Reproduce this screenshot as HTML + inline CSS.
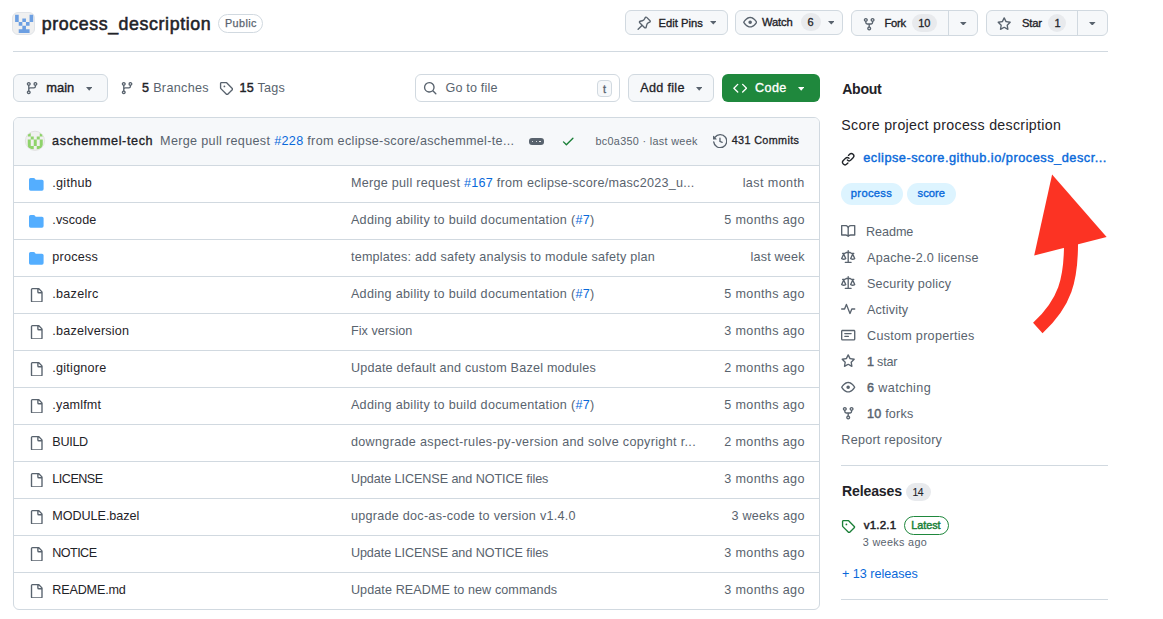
<!DOCTYPE html>
<html><head><meta charset="utf-8"><style>
html,body{margin:0;padding:0;width:1163px;height:619px;overflow:hidden;background:#fff;}
body{position:relative;font-family:"Liberation Sans", sans-serif;color:#1f2328;}
.t{position:absolute;white-space:nowrap;line-height:1;}
b{font-weight:700;}
.sb{-webkit-text-stroke:0.45px currentColor;}
</style></head><body>
<div style="position:absolute;left:12px;top:12px;width:23px;height:23px;box-sizing:border-box;background:#f0f0f0;border:1px solid #e1e4e8;border-radius:6px;"></div><svg style="position:absolute;left:0;top:0" width="40" height="40"><g fill="#6c9fe2"><path d="M15.10 14.85h3.62v3.62h-3.62zM29.58 14.85h3.62v3.62h-3.62zM15.10 18.47h3.62v3.62h-3.62zM22.34 18.47h3.62v3.62h-3.62zM29.58 18.47h3.62v3.62h-3.62zM18.72 22.09h3.62v3.62h-3.62zM25.96 22.09h3.62v3.62h-3.62zM22.34 25.71h3.62v3.62h-3.62zM18.72 29.33h3.62v3.62h-3.62zM22.34 29.33h3.62v3.62h-3.62zM25.96 29.33h3.62v3.62h-3.62z"/></g></svg><div id="t8b17212c1c" class="t" style="left:41.68px;top:16px;font-size:17.8px;letter-spacing:0.600px;-webkit-text-stroke:0.55px currentColor;">process_description</div><div style="position:absolute;left:218px;top:14px;width:45px;height:19px;box-sizing:border-box;border:1px solid #d1d9e0;border-radius:10px;"></div><div id="tdd5ad1b8c6" class="t" style="left:225.00px;top:18px;font-size:10.8px;color:#59636e;letter-spacing:0.396px;-webkit-text-stroke:0.25px currentColor;">Public</div><div style="position:absolute;left:625px;top:10px;width:102.5px;height:25px;box-sizing:border-box;background:#f6f8fa;border:1px solid #d1d9e0;border-radius:6px;"></div><svg style="position:absolute;left:636.80px;top:16.40px" width="14.4" height="14.4" viewBox="0 0 16 16"><path fill="#59636e" d="m11.294.984 3.722 3.722a1.75 1.75 0 0 1-.504 2.826l-1.327.613a3.089 3.089 0 0 0-1.707 2.084l-.584 2.454c-.317 1.332-1.972 1.8-2.94.832L5.75 11.311 1.78 15.28a.749.749 0 1 1-1.06-1.06l3.969-3.97-2.204-2.204c-.968-.968-.5-2.623.832-2.94l2.454-.584a3.08 3.08 0 0 0 2.084-1.707l.613-1.327a1.75 1.75 0 0 1 2.826-.504ZM6.283 9.723l2.732 2.731a.25.25 0 0 0 .42-.119l.584-2.454a4.586 4.586 0 0 1 2.537-3.098l1.328-.613a.25.25 0 0 0 .072-.404l-3.722-3.722a.25.25 0 0 0-.404.072l-.613 1.328a4.584 4.584 0 0 1-3.098 2.537l-2.454.584a.25.25 0 0 0-.119.42l2.731 2.732Z"/></svg><div id="tac3225b6e4" class="t" style="left:658.42px;top:18px;font-size:11.2px;letter-spacing:0.022px;-webkit-text-stroke:0.35px currentColor;">Edit Pins</div><svg style="position:absolute;left:709.70px;top:21.00px" width="6.6" height="3.6" viewBox="0 0 6.6 3.6"><path fill="#59636e" d="M0 0h6.6L3.3 3.6z"/></svg><div style="position:absolute;left:735px;top:10px;width:107.5px;height:25px;box-sizing:border-box;background:#f6f8fa;border:1px solid #d1d9e0;border-radius:6px;"></div><svg style="position:absolute;left:742.80px;top:14.80px" width="14.4" height="14.4" viewBox="0 0 16 16"><path fill="#59636e" d="M8 2c1.981 0 3.671.992 4.933 2.078 1.27 1.091 2.187 2.345 2.637 3.023a1.62 1.62 0 0 1 0 1.798c-.45.678-1.367 1.932-2.637 3.023C11.67 13.008 9.981 14 8 14c-1.981 0-3.671-.992-4.933-2.078C1.797 10.83.88 9.576.43 8.898a1.62 1.62 0 0 1 0-1.798c.45-.677 1.367-1.931 2.637-3.022C4.33 2.992 6.019 2 8 2ZM1.679 7.932a.12.12 0 0 0 0 .136c.411.622 1.241 1.75 2.366 2.717C5.176 11.758 6.527 12.5 8 12.5c1.473 0 2.825-.742 3.955-1.715 1.124-.967 1.954-2.096 2.366-2.717a.12.12 0 0 0 0-.136c-.412-.621-1.242-1.75-2.366-2.717C10.824 4.242 9.473 3.5 8 3.5c-1.473 0-2.825.742-3.955 1.715-1.124.967-1.954 2.096-2.366 2.717ZM8 10a2 2 0 1 1-.001-3.999A2 2 0 0 1 8 10Z"/></svg><div id="tc97a226b69" class="t" style="left:761.94px;top:17px;font-size:11.2px;letter-spacing:-0.135px;-webkit-text-stroke:0.35px currentColor;">Watch</div><div style="position:absolute;left:801px;top:13px;width:20px;height:18px;box-sizing:border-box;background:#e8eaed;border-radius:9px;"></div><div id="t34bc808f8b" class="t" style="left:807.54px;top:17px;font-size:11px;-webkit-text-stroke:0.3px currentColor;">6</div><svg style="position:absolute;left:827.70px;top:21.00px" width="6.6" height="3.6" viewBox="0 0 6.6 3.6"><path fill="#59636e" d="M0 0h6.6L3.3 3.6z"/></svg><div style="position:absolute;left:851px;top:10px;width:126.5px;height:26px;box-sizing:border-box;background:#f6f8fa;border:1px solid #d1d9e0;border-radius:6px;"></div><div style="position:absolute;left:948px;top:10px;width:1px;height:26px;box-sizing:border-box;background:#d1d9e0;"></div><svg style="position:absolute;left:862.30px;top:16.50px" width="14.4" height="14.4" viewBox="0 0 16 16"><path fill="#59636e" d="M5 5.372v.878c0 .414.336.75.75.75h4.5a.75.75 0 0 0 .75-.75v-.878a2.25 2.25 0 1 1 1.5 0v.878a2.25 2.25 0 0 1-2.25 2.25h-1.5v2.128a2.251 2.251 0 1 1-1.5 0V8.5h-1.5A2.25 2.25 0 0 1 3.5 6.250v-.878a2.25 2.25 0 1 1 1.5 0ZM5 3.25a.75.75 0 1 0-1.5 0 .75.75 0 0 0 1.5 0Zm6.75.75a.75.75 0 1 0 0-1.5.75.75 0 0 0 0 1.5Zm-3 8.75a.75.75 0 1 0-1.5 0 .75.75 0 0 0 1.5 0Z"/></svg><div id="te26f756ed9" class="t" style="left:884.50px;top:18px;font-size:11.2px;letter-spacing:-0.300px;-webkit-text-stroke:0.35px currentColor;">Fork</div><div style="position:absolute;left:912px;top:14px;width:25px;height:18px;box-sizing:border-box;background:#e8eaed;border-radius:9px;"></div><div id="t4f3d571c36" class="t" style="left:918.26px;top:18px;font-size:11px;letter-spacing:-0.180px;-webkit-text-stroke:0.3px currentColor;">10</div><svg style="position:absolute;left:960.20px;top:21.50px" width="6.6" height="3.6" viewBox="0 0 6.6 3.6"><path fill="#59636e" d="M0 0h6.6L3.3 3.6z"/></svg><div style="position:absolute;left:986px;top:10px;width:121.5px;height:26px;box-sizing:border-box;background:#f6f8fa;border:1px solid #d1d9e0;border-radius:6px;"></div><div style="position:absolute;left:1077px;top:10px;width:1px;height:26px;box-sizing:border-box;background:#d1d9e0;"></div><svg style="position:absolute;left:996.80px;top:17.00px" width="14.4" height="14.4" viewBox="0 0 16 16"><path fill="#59636e" d="M8 .25a.75.75 0 0 1 .673.418l1.882 3.815 4.21.612a.75.75 0 0 1 .416 1.279l-3.046 2.97.719 4.192a.751.751 0 0 1-1.088.791L8 12.347l-3.766 1.98a.75.75 0 0 1-1.088-.79l.72-4.194L.818 6.374a.75.75 0 0 1 .416-1.28l4.210-.611L7.327.668A.75.75 0 0 1 8 .25Zm0 2.445L6.615 5.5a.75.75 0 0 1-.564.41l-3.097.45 2.24 2.184a.75.75 0 0 1 .216.664l-.528 3.084 2.769-1.456a.75.75 0 0 1 .698 0l2.770 1.456-.53-3.084a.75.75 0 0 1 .216-.664l2.24-2.183-3.096-.45a.75.75 0 0 1-.564-.41L8 2.694Z"/></svg><div id="t8c9d972296" class="t" style="left:1022.00px;top:18px;font-size:11.2px;letter-spacing:-0.180px;-webkit-text-stroke:0.35px currentColor;">Star</div><div style="position:absolute;left:1048px;top:14px;width:18px;height:18px;box-sizing:border-box;background:#e8eaed;border-radius:9px;"></div><div id="t7c7e71d39a" class="t" style="left:1054.40px;top:18px;font-size:11px;-webkit-text-stroke:0.3px currentColor;">1</div><svg style="position:absolute;left:1089.00px;top:21.50px" width="6.6" height="3.6" viewBox="0 0 6.6 3.6"><path fill="#59636e" d="M0 0h6.6L3.3 3.6z"/></svg><div style="position:absolute;left:13px;top:51px;width:1095px;height:1px;box-sizing:border-box;background:#d1d9e0;"></div><div style="position:absolute;left:13px;top:74px;width:95px;height:28px;box-sizing:border-box;background:#f6f8fa;border:1px solid #d1d9e0;border-radius:6px;"></div><svg style="position:absolute;left:25.10px;top:81.30px" width="14.2" height="14.2" viewBox="0 0 16 16"><path fill="#59636e" d="M9.5 3.25a2.25 2.25 0 1 1 3 2.122V6A2.5 2.5 0 0 1 10 8.5H6a1 1 0 0 0-1 1v1.128a2.251 2.251 0 1 1-1.5 0V5.372a2.25 2.25 0 1 1 1.5 0v1.836A2.493 2.493 0 0 1 6 7h4a1 1 0 0 0 1-1v-.628A2.25 2.25 0 0 1 9.5 3.25Zm-6 0a.75.75 0 1 0 1.5 0 .75.75 0 0 0-1.5 0Zm8.25-.75a.75.75 0 1 0 0 1.5.75.75 0 0 0 0-1.5ZM4.250 12a.75.75 0 1 0 0 1.5.75.75 0 0 0 0-1.5Z"/></svg><div id="t1631a690d2" class="t" style="left:46.26px;top:82px;font-size:12.9px;letter-spacing:-0.000px;-webkit-text-stroke:0.4px currentColor;">main</div><svg style="position:absolute;left:86.00px;top:87.00px" width="6.4" height="3.8" viewBox="0 0 6.4 3.8"><path fill="#59636e" d="M0 0h6.4L3.2 3.8z"/></svg><svg style="position:absolute;left:120.20px;top:81.30px" width="14.2" height="14.2" viewBox="0 0 16 16"><path fill="#59636e" d="M9.5 3.25a2.25 2.25 0 1 1 3 2.122V6A2.5 2.5 0 0 1 10 8.5H6a1 1 0 0 0-1 1v1.128a2.251 2.251 0 1 1-1.5 0V5.372a2.25 2.25 0 1 1 1.5 0v1.836A2.493 2.493 0 0 1 6 7h4a1 1 0 0 0 1-1v-.628A2.25 2.25 0 0 1 9.5 3.25Zm-6 0a.75.75 0 1 0 1.5 0 .75.75 0 0 0-1.5 0Zm8.25-.75a.75.75 0 1 0 0 1.5.75.75 0 0 0 0-1.5ZM4.250 12a.75.75 0 1 0 0 1.5.75.75 0 0 0 0-1.5Z"/></svg><div id="t683ed94d93" class="t" style="left:142.00px;top:82px;font-size:12.6px;color:#59636e;letter-spacing:0.320px;"><span style="color:#1f2328;-webkit-text-stroke:0.45px #1f2328">5</span> Branches</div><svg style="position:absolute;left:218.60px;top:80.80px" width="14.4" height="14.4" viewBox="0 0 16 16"><path fill="#59636e" d="M1 7.775V2.75C1 1.784 1.784 1 2.75 1h5.025c.464 0 .91.184 1.238.513l6.25 6.25a1.75 1.75 0 0 1 0 2.474l-5.026 5.026a1.75 1.75 0 0 1-2.474 0l-6.25-6.25A1.752 1.752 0 0 1 1 7.775Zm1.5 0c0 .066.026.13.073.177l6.25 6.25a.25.25 0 0 0 .354 0l5.025-5.025a.25.25 0 0 0 0-.354l-6.25-6.25a.25.25 0 0 0-.177-.073H2.75a.25.25 0 0 0-.25.25ZM6 5a1 1 0 1 1 0 2 1 1 0 0 1 0-2Z"/></svg><div id="t6537c4cc53" class="t" style="left:239.42px;top:82px;font-size:12.6px;color:#59636e;letter-spacing:0.240px;"><span style="color:#1f2328;-webkit-text-stroke:0.45px #1f2328">15</span> Tags</div><div style="position:absolute;left:415px;top:74px;width:205px;height:28px;box-sizing:border-box;background:#fff;border:1px solid #d1d9e0;border-radius:6px;"></div><svg style="position:absolute;left:422.80px;top:80.80px" width="14.4" height="14.4" viewBox="0 0 16 16"><path fill="#59636e" d="M10.68 11.74a6 6 0 0 1-7.922-8.982 6 6 0 0 1 8.982 7.922l3.04 3.04a.749.749 0 0 1-.326 1.275.749.749 0 0 1-.734-.215ZM11.5 7a4.499 4.499 0 1 0-8.997 0A4.499 4.499 0 0 0 11.5 7Z"/></svg><div id="ta41661dc48" class="t" style="left:445.58px;top:82px;font-size:12.6px;color:#59636e;letter-spacing:0.160px;">Go to file</div><div style="position:absolute;left:597px;top:80px;width:15px;height:17px;box-sizing:border-box;border:1px solid #d1d9e0;border-radius:4px;background:#f6f8fa;"></div><div id="t28959b50f7" class="t" style="left:603.00px;top:84px;font-size:11px;color:#59636e;-webkit-text-stroke:0.3px currentColor;font-family:"Liberation Mono",monospace;">t</div><div style="position:absolute;left:628px;top:74px;width:86px;height:28px;box-sizing:border-box;background:#f6f8fa;border:1px solid #d1d9e0;border-radius:6px;"></div><div id="t6fa10919dd" class="t" style="left:640.24px;top:82px;font-size:12.6px;letter-spacing:0.309px;-webkit-text-stroke:0.3px currentColor;">Add file</div><svg style="position:absolute;left:695.80px;top:87.00px" width="6.4" height="3.8" viewBox="0 0 6.4 3.8"><path fill="#59636e" d="M0 0h6.4L3.2 3.8z"/></svg><div style="position:absolute;left:722px;top:74px;width:98px;height:28px;box-sizing:border-box;background:#1f883d;border-radius:6px;"></div><svg style="position:absolute;left:732.50px;top:80.80px" width="14.4" height="14.4" viewBox="0 0 16 16"><path fill="#ffffff" d="m11.28 3.22 4.25 4.25a.75.75 0 0 1 0 1.06l-4.25 4.25a.749.749 0 0 1-1.275-.326.749.749 0 0 1 .215-.734L13.94 8l-3.72-3.72a.749.749 0 0 1 .326-1.275.749.749 0 0 1 .734.215Zm-6.56 0a.751.751 0 0 1 1.042.018.751.751 0 0 1 .018 1.042L2.06 8l3.72 3.72a.749.749 0 0 1-.326 1.275.749.749 0 0 1-.734-.215L.47 8.53a.75.75 0 0 1 0-1.060Z"/></svg><div id="tdfc1d32175" class="t" style="left:755.08px;top:82px;font-size:12.6px;color:#ffffff;letter-spacing:0.360px;-webkit-text-stroke:0.35px currentColor;">Code</div><svg style="position:absolute;left:797.80px;top:87.00px" width="6.4" height="3.8" viewBox="0 0 6.4 3.8"><path fill="#ffffff" d="M0 0h6.4L3.2 3.8z"/></svg><div style="position:absolute;left:13px;top:117px;width:807px;height:493px;box-sizing:border-box;border:1px solid #d1d9e0;border-radius:6px;"></div><div style="position:absolute;left:14px;top:118px;width:805px;height:47px;box-sizing:border-box;background:#f6f8fa;border-radius:5px 5px 0 0;"></div><div style="position:absolute;left:14px;top:165px;width:805px;height:1px;box-sizing:border-box;background:#d1d9e0;"></div><svg style="position:absolute;left:0;top:0" width="60" height="160"><defs><clipPath id="av"><circle cx="35" cy="140.8" r="9.2"/></clipPath></defs><circle cx="35" cy="140.8" r="9.6" fill="#f0f0f0" stroke="#dcdcdc" stroke-width="0.8"/><g clip-path="url(#av)" fill="#8fd36b"><path d="M27.76 133.20h3v3.2h-3zM39.76 133.20h3v3.2h-3zM30.76 136.40h3v3.2h-3zM36.76 136.40h3v3.2h-3zM27.76 139.60h3v3.2h-3zM33.76 139.60h3v3.2h-3zM39.76 139.60h3v3.2h-3zM27.76 142.80h3v3.2h-3zM33.76 142.80h3v3.2h-3zM39.76 142.80h3v3.2h-3zM27.76 146.00h3v3.2h-3zM30.76 146.00h3v3.2h-3zM36.76 146.00h3v3.2h-3zM39.76 146.00h3v3.2h-3z"/></g></svg><div id="t34e2957233" class="t" style="left:52.08px;top:135px;font-size:12.6px;letter-spacing:0.623px;-webkit-text-stroke:0.35px currentColor;">aschemmel-tech</div><div id="tb437428aec" class="t" style="left:160.10px;top:135px;font-size:12.6px;color:#59636e;letter-spacing:0.328px;">Merge pull request <span style="color:#0969da">#228</span> from eclipse-score/aschemmel-te...</div><div style="position:absolute;left:528.5px;top:138.3px;width:15.5px;height:6.6px;box-sizing:border-box;background:#59636e;border-radius:3px;"></div><div style="position:absolute;left:531.6px;top:140.8px;width:1.6px;height:1.6px;background:#fff;border-radius:1px"></div><div style="position:absolute;left:535.5px;top:140.8px;width:1.6px;height:1.6px;background:#fff;border-radius:1px"></div><div style="position:absolute;left:539.4px;top:140.8px;width:1.6px;height:1.6px;background:#fff;border-radius:1px"></div><svg style="position:absolute;left:561.20px;top:134.30px" width="14.4" height="14.4" viewBox="0 0 16 16"><path fill="#1a7f37" d="M13.78 4.22a.75.75 0 0 1 0 1.06l-7.25 7.25a.75.75 0 0 1-1.06 0L2.22 9.28a.751.751 0 0 1 .018-1.042.751.751 0 0 1 1.042-.018L6 10.94l6.72-6.72a.75.75 0 0 1 1.06 0Z"/></svg><div id="t84d6ec03fd" class="t" style="left:595.42px;top:136px;font-size:10.8px;color:#59636e;letter-spacing:0.330px;">bc0a350 · last week</div><svg style="position:absolute;left:712.80px;top:133.80px" width="14.4" height="14.4" viewBox="0 0 16 16"><path fill="#59636e" d="m.427 1.927 1.215 1.215a8.002 8.002 0 1 1-1.6 5.685.75.75 0 1 1 1.493-.154 6.5 6.5 0 1 0 1.18-4.458l1.358 1.358A.25.25 0 0 1 3.896 6H.25A.25.25 0 0 1 0 5.75V2.104a.25.25 0 0 1 .427-.177ZM7.75 4a.75.75 0 0 1 .75.75v2.992l2.028.812a.75.75 0 0 1-.557 1.392l-2.5-1A.751.751 0 0 1 7 8.25v-3.5A.75.75 0 0 1 7.750 4Z"/></svg><div id="t3a98413a29" class="t" style="left:731.75px;top:135px;font-size:10.8px;letter-spacing:0.360px;-webkit-text-stroke:0.3px currentColor;">431 Commits</div><svg style="position:absolute;left:29.00px;top:177.20px" width="14.6" height="14.6" viewBox="0 0 16 16"><path fill="#54aeff" d="M1.75 1A1.75 1.75 0 0 0 0 2.75v10.5C0 14.216.784 15 1.75 15h12.5A1.75 1.75 0 0 0 16 13.25v-8.5A1.75 1.75 0 0 0 14.25 3H7.5a.25.25 0 0 1-.2-.1l-.9-1.2C6.07 1.26 5.55 1 5 1H1.75Z"/></svg><div id="t693cb65e8e" class="t" style="left:52.34px;top:177px;font-size:12.6px;letter-spacing:0.270px;">.github</div><div id="t757d5afaf3" class="t" style="left:350.92px;top:177px;font-size:12.6px;color:#59636e;letter-spacing:0.275px;">Merge pull request <span style="color:#0969da">#167</span> from eclipse-score/masc2023_u...</div><div id="tedafb58f2a" class="t" style="right:358.26px;top:177px;font-size:12.6px;color:#59636e;letter-spacing:0.400px;">last month</div><div style="position:absolute;left:14px;top:202px;width:805px;height:1px;box-sizing:border-box;background:#d1d9e0;"></div><svg style="position:absolute;left:29.00px;top:214.20px" width="14.6" height="14.6" viewBox="0 0 16 16"><path fill="#54aeff" d="M1.75 1A1.75 1.75 0 0 0 0 2.75v10.5C0 14.216.784 15 1.75 15h12.5A1.75 1.75 0 0 0 16 13.25v-8.5A1.75 1.75 0 0 0 14.25 3H7.5a.25.25 0 0 1-.2-.1l-.9-1.2C6.07 1.26 5.55 1 5 1H1.75Z"/></svg><div id="tb964a43cd2" class="t" style="left:52.34px;top:214px;font-size:12.6px;letter-spacing:0.090px;">.vscode</div><div id="t1fcf0367ab" class="t" style="left:350.92px;top:214px;font-size:12.6px;color:#59636e;letter-spacing:0.299px;">Adding ability to build documentation (<span style="color:#0969da">#7</span>)</div><div id="t63a347cd2c" class="t" style="right:358.26px;top:214px;font-size:12.6px;color:#59636e;letter-spacing:0.344px;">5 months ago</div><div style="position:absolute;left:14px;top:239px;width:805px;height:1px;box-sizing:border-box;background:#d1d9e0;"></div><svg style="position:absolute;left:29.00px;top:251.20px" width="14.6" height="14.6" viewBox="0 0 16 16"><path fill="#54aeff" d="M1.75 1A1.75 1.75 0 0 0 0 2.75v10.5C0 14.216.784 15 1.75 15h12.5A1.75 1.75 0 0 0 16 13.25v-8.5A1.75 1.75 0 0 0 14.25 3H7.5a.25.25 0 0 1-.2-.1l-.9-1.2C6.07 1.26 5.55 1 5 1H1.75Z"/></svg><div id="t13e4412f89" class="t" style="left:52.34px;top:251px;font-size:12.6px;letter-spacing:0.240px;">process</div><div id="t881ccb6239" class="t" style="left:350.92px;top:251px;font-size:12.6px;color:#59636e;letter-spacing:0.233px;">templates: add safety analysis to module safety plan</div><div id="tad0153e79e" class="t" style="right:358.26px;top:251px;font-size:12.6px;color:#59636e;letter-spacing:0.203px;">last week</div><div style="position:absolute;left:14px;top:276px;width:805px;height:1px;box-sizing:border-box;background:#d1d9e0;"></div><svg style="position:absolute;left:29.00px;top:287.60px" width="14.6" height="14.6" viewBox="0 0 16 16"><path fill="#59636e" d="M2 1.75C2 .784 2.784 0 3.75 0h6.586c.464 0 .909.184 1.237.513l2.914 2.914c.329.328.513.773.513 1.237v9.586A1.75 1.75 0 0 1 13.25 16h-9.5A1.75 1.75 0 0 1 2 14.25Zm1.75-.25a.25.25 0 0 0-.25.25v12.5c0 .138.112.25.25.25h9.5a.25.25 0 0 0 .25-.25V6h-2.75A1.75 1.75 0 0 1 9 4.25V1.5Zm6.75.062V4.25c0 .138.112.25.25.25h2.688l-.011-.013-2.914-2.914-.013-.011Z"/></svg><div id="tc4758a8e51" class="t" style="left:52.34px;top:288px;font-size:12.6px;letter-spacing:0.257px;">.bazelrc</div><div id="t80e3af01cb" class="t" style="left:350.92px;top:288px;font-size:12.6px;color:#59636e;letter-spacing:0.299px;">Adding ability to build documentation (<span style="color:#0969da">#7</span>)</div><div id="ta78df9fcaa" class="t" style="right:358.26px;top:288px;font-size:12.6px;color:#59636e;letter-spacing:0.344px;">5 months ago</div><div style="position:absolute;left:14px;top:313px;width:805px;height:1px;box-sizing:border-box;background:#d1d9e0;"></div><svg style="position:absolute;left:29.00px;top:324.60px" width="14.6" height="14.6" viewBox="0 0 16 16"><path fill="#59636e" d="M2 1.75C2 .784 2.784 0 3.75 0h6.586c.464 0 .909.184 1.237.513l2.914 2.914c.329.328.513.773.513 1.237v9.586A1.75 1.75 0 0 1 13.25 16h-9.5A1.75 1.75 0 0 1 2 14.25Zm1.75-.25a.25.25 0 0 0-.25.25v12.5c0 .138.112.25.25.25h9.5a.25.25 0 0 0 .25-.25V6h-2.75A1.75 1.75 0 0 1 9 4.25V1.5Zm6.75.062V4.25c0 .138.112.25.25.25h2.688l-.011-.013-2.914-2.914-.013-.011Z"/></svg><div id="t6b29b31ef8" class="t" style="left:52.34px;top:325px;font-size:12.6px;letter-spacing:0.210px;">.bazelversion</div><div id="tfd774a989e" class="t" style="left:350.92px;top:325px;font-size:12.6px;color:#59636e;letter-spacing:0.054px;">Fix version</div><div id="tcd8273200e" class="t" style="right:358.26px;top:325px;font-size:12.6px;color:#59636e;letter-spacing:0.344px;">3 months ago</div><div style="position:absolute;left:14px;top:350px;width:805px;height:1px;box-sizing:border-box;background:#d1d9e0;"></div><svg style="position:absolute;left:29.00px;top:361.60px" width="14.6" height="14.6" viewBox="0 0 16 16"><path fill="#59636e" d="M2 1.75C2 .784 2.784 0 3.75 0h6.586c.464 0 .909.184 1.237.513l2.914 2.914c.329.328.513.773.513 1.237v9.586A1.75 1.75 0 0 1 13.25 16h-9.5A1.75 1.75 0 0 1 2 14.25Zm1.75-.25a.25.25 0 0 0-.25.25v12.5c0 .138.112.25.25.25h9.5a.25.25 0 0 0 .25-.25V6h-2.75A1.75 1.75 0 0 1 9 4.25V1.5Zm6.75.062V4.25c0 .138.112.25.25.25h2.688l-.011-.013-2.914-2.914-.013-.011Z"/></svg><div id="t6efb4a5c7c" class="t" style="left:52.34px;top:362px;font-size:12.6px;letter-spacing:0.240px;">.gitignore</div><div id="te20e4e4079" class="t" style="left:350.92px;top:362px;font-size:12.6px;color:#59636e;letter-spacing:0.218px;">Update default and custom Bazel modules</div><div id="tb817984655" class="t" style="right:358.26px;top:362px;font-size:12.6px;color:#59636e;letter-spacing:0.344px;">2 months ago</div><div style="position:absolute;left:14px;top:387px;width:805px;height:1px;box-sizing:border-box;background:#d1d9e0;"></div><svg style="position:absolute;left:29.00px;top:398.60px" width="14.6" height="14.6" viewBox="0 0 16 16"><path fill="#59636e" d="M2 1.75C2 .784 2.784 0 3.75 0h6.586c.464 0 .909.184 1.237.513l2.914 2.914c.329.328.513.773.513 1.237v9.586A1.75 1.75 0 0 1 13.25 16h-9.5A1.75 1.75 0 0 1 2 14.25Zm1.75-.25a.25.25 0 0 0-.25.25v12.5c0 .138.112.25.25.25h9.5a.25.25 0 0 0 .25-.25V6h-2.75A1.75 1.75 0 0 1 9 4.25V1.5Zm6.75.062V4.25c0 .138.112.25.25.25h2.688l-.011-.013-2.914-2.914-.013-.011Z"/></svg><div id="t2ddbf4104c" class="t" style="left:52.34px;top:399px;font-size:12.6px;letter-spacing:0.154px;">.yamlfmt</div><div id="td0062f35b5" class="t" style="left:350.92px;top:399px;font-size:12.6px;color:#59636e;letter-spacing:0.299px;">Adding ability to build documentation (<span style="color:#0969da">#7</span>)</div><div id="t9f760e296a" class="t" style="right:358.26px;top:399px;font-size:12.6px;color:#59636e;letter-spacing:0.344px;">5 months ago</div><div style="position:absolute;left:14px;top:424px;width:805px;height:1px;box-sizing:border-box;background:#d1d9e0;"></div><svg style="position:absolute;left:29.00px;top:435.60px" width="14.6" height="14.6" viewBox="0 0 16 16"><path fill="#59636e" d="M2 1.75C2 .784 2.784 0 3.75 0h6.586c.464 0 .909.184 1.237.513l2.914 2.914c.329.328.513.773.513 1.237v9.586A1.75 1.75 0 0 1 13.25 16h-9.5A1.75 1.75 0 0 1 2 14.25Zm1.75-.25a.25.25 0 0 0-.25.25v12.5c0 .138.112.25.25.25h9.5a.25.25 0 0 0 .25-.25V6h-2.75A1.75 1.75 0 0 1 9 4.25V1.5Zm6.75.062V4.25c0 .138.112.25.25.25h2.688l-.011-.013-2.914-2.914-.013-.011Z"/></svg><div id="t78476db322" class="t" style="left:52.34px;top:436px;font-size:12.6px;letter-spacing:-0.315px;">BUILD</div><div id="tc9a3def5b4" class="t" style="left:350.92px;top:436px;font-size:12.6px;color:#59636e;letter-spacing:0.325px;">downgrade aspect-rules-py-version and solve copyright r...</div><div id="tdfd9374d6f" class="t" style="right:358.26px;top:436px;font-size:12.6px;color:#59636e;letter-spacing:0.344px;">2 months ago</div><div style="position:absolute;left:14px;top:461px;width:805px;height:1px;box-sizing:border-box;background:#d1d9e0;"></div><svg style="position:absolute;left:29.00px;top:472.60px" width="14.6" height="14.6" viewBox="0 0 16 16"><path fill="#59636e" d="M2 1.75C2 .784 2.784 0 3.75 0h6.586c.464 0 .909.184 1.237.513l2.914 2.914c.329.328.513.773.513 1.237v9.586A1.75 1.75 0 0 1 13.25 16h-9.5A1.75 1.75 0 0 1 2 14.25Zm1.75-.25a.25.25 0 0 0-.25.25v12.5c0 .138.112.25.25.25h9.5a.25.25 0 0 0 .25-.25V6h-2.75A1.75 1.75 0 0 1 9 4.25V1.5Zm6.75.062V4.25c0 .138.112.25.25.25h2.688l-.011-.013-2.914-2.914-.013-.011Z"/></svg><div id="t772ee7caaa" class="t" style="left:52.34px;top:473px;font-size:12.6px;letter-spacing:-0.510px;">LICENSE</div><div id="t1b834441aa" class="t" style="left:350.92px;top:473px;font-size:12.6px;color:#59636e;letter-spacing:-0.066px;">Update LICENSE and NOTICE files</div><div id="tb383c43e73" class="t" style="right:358.26px;top:473px;font-size:12.6px;color:#59636e;letter-spacing:0.344px;">3 months ago</div><div style="position:absolute;left:14px;top:498px;width:805px;height:1px;box-sizing:border-box;background:#d1d9e0;"></div><svg style="position:absolute;left:29.00px;top:509.60px" width="14.6" height="14.6" viewBox="0 0 16 16"><path fill="#59636e" d="M2 1.75C2 .784 2.784 0 3.75 0h6.586c.464 0 .909.184 1.237.513l2.914 2.914c.329.328.513.773.513 1.237v9.586A1.75 1.75 0 0 1 13.25 16h-9.5A1.75 1.75 0 0 1 2 14.25Zm1.75-.25a.25.25 0 0 0-.25.25v12.5c0 .138.112.25.25.25h9.5a.25.25 0 0 0 .25-.25V6h-2.75A1.75 1.75 0 0 1 9 4.25V1.5Zm6.75.062V4.25c0 .138.112.25.25.25h2.688l-.011-.013-2.914-2.914-.013-.011Z"/></svg><div id="td0441876fb" class="t" style="left:52.34px;top:510px;font-size:12.6px;letter-spacing:-0.049px;">MODULE.bazel</div><div id="t4c3808f57f" class="t" style="left:350.92px;top:510px;font-size:12.6px;color:#59636e;letter-spacing:0.270px;">upgrade doc-as-code to version v1.4.0</div><div id="t8b27b85cb4" class="t" style="right:358.26px;top:510px;font-size:12.6px;color:#59636e;letter-spacing:0.234px;">3 weeks ago</div><div style="position:absolute;left:14px;top:535px;width:805px;height:1px;box-sizing:border-box;background:#d1d9e0;"></div><svg style="position:absolute;left:29.00px;top:546.60px" width="14.6" height="14.6" viewBox="0 0 16 16"><path fill="#59636e" d="M2 1.75C2 .784 2.784 0 3.75 0h6.586c.464 0 .909.184 1.237.513l2.914 2.914c.329.328.513.773.513 1.237v9.586A1.75 1.75 0 0 1 13.25 16h-9.5A1.75 1.75 0 0 1 2 14.25Zm1.75-.25a.25.25 0 0 0-.25.25v12.5c0 .138.112.25.25.25h9.5a.25.25 0 0 0 .25-.25V6h-2.75A1.75 1.75 0 0 1 9 4.25V1.5Zm6.75.062V4.25c0 .138.112.25.25.25h2.688l-.011-.013-2.914-2.914-.013-.011Z"/></svg><div id="t14eef5b31e" class="t" style="left:52.34px;top:547px;font-size:12.6px;letter-spacing:-0.576px;">NOTICE</div><div id="td86ba00a0a" class="t" style="left:350.92px;top:547px;font-size:12.6px;color:#59636e;letter-spacing:-0.066px;">Update LICENSE and NOTICE files</div><div id="tbae80f5edf" class="t" style="right:358.26px;top:547px;font-size:12.6px;color:#59636e;letter-spacing:0.344px;">3 months ago</div><div style="position:absolute;left:14px;top:572px;width:805px;height:1px;box-sizing:border-box;background:#d1d9e0;"></div><svg style="position:absolute;left:29.00px;top:583.60px" width="14.6" height="14.6" viewBox="0 0 16 16"><path fill="#59636e" d="M2 1.75C2 .784 2.784 0 3.75 0h6.586c.464 0 .909.184 1.237.513l2.914 2.914c.329.328.513.773.513 1.237v9.586A1.75 1.75 0 0 1 13.25 16h-9.5A1.75 1.75 0 0 1 2 14.25Zm1.75-.25a.25.25 0 0 0-.25.25v12.5c0 .138.112.25.25.25h9.5a.25.25 0 0 0 .25-.25V6h-2.75A1.75 1.75 0 0 1 9 4.25V1.5Zm6.75.062V4.25c0 .138.112.25.25.25h2.688l-.011-.013-2.914-2.914-.013-.011Z"/></svg><div id="t74edcec3f6" class="t" style="left:52.34px;top:584px;font-size:12.6px;letter-spacing:-0.180px;">README.md</div><div id="tb11e4d496f" class="t" style="left:350.92px;top:584px;font-size:12.6px;color:#59636e;letter-spacing:0.090px;">Update README to new commands</div><div id="ta1531fbd84" class="t" style="right:358.26px;top:584px;font-size:12.6px;color:#59636e;letter-spacing:0.344px;">3 months ago</div><div id="t269ccccff1" class="t" style="left:842.24px;top:82px;font-size:14.1px;font-weight:700;letter-spacing:-0.315px;">About</div><div id="t250615a776" class="t" style="left:841.34px;top:118px;font-size:14.2px;letter-spacing:0.304px;">Score project process description</div><svg style="position:absolute;left:841.30px;top:151.80px" width="14.4" height="14.4" viewBox="0 0 16 16"><path fill="#1f2328" d="m7.775 3.275 1.25-1.25a3.5 3.5 0 1 1 4.95 4.95l-2.5 2.5a3.5 3.5 0 0 1-4.95 0 .751.751 0 0 1 .018-1.042.751.751 0 0 1 1.042-.018 1.998 1.998 0 0 0 2.83 0l2.5-2.5a2.002 2.002 0 0 0-2.83-2.83l-1.25 1.25a.751.751 0 0 1-1.042-.018.751.751 0 0 1-.018-1.042Zm-4.69 9.64a1.998 1.998 0 0 0 2.83 0l1.25-1.25a.751.751 0 0 1 1.042.018.751.751 0 0 1 .018 1.042l-1.25 1.25a3.5 3.5 0 1 1-4.95-4.95l2.5-2.5a3.5 3.5 0 0 1 4.95 0 .751.751 0 0 1-.018 1.042.751.751 0 0 1-1.042.018 1.998 1.998 0 0 0-2.83 0l-2.5 2.5a1.998 1.998 0 0 0 0 2.830Z"/></svg><div id="tdb09357d8a" class="t" style="left:863.22px;top:152px;font-size:12.8px;color:#0969da;letter-spacing:0.489px;-webkit-text-stroke:0.4px currentColor;">eclipse-score.github.io/process_descr...</div><div style="position:absolute;left:841px;top:183px;width:62px;height:22px;box-sizing:border-box;background:#ddf4ff;border-radius:11px;"></div><div id="t450db30186" class="t" style="left:850.86px;top:188px;font-size:11.2px;color:#0969da;letter-spacing:0.285px;-webkit-text-stroke:0.35px currentColor;">process</div><div style="position:absolute;left:906.5px;top:183px;width:49.5px;height:22px;box-sizing:border-box;background:#ddf4ff;border-radius:11px;"></div><div id="t36bfde3de8" class="t" style="left:917.57px;top:188px;font-size:11.2px;color:#0969da;-webkit-text-stroke:0.35px currentColor;">score</div><svg style="position:absolute;left:841.20px;top:224.20px" width="14.4" height="14.4" viewBox="0 0 16 16"><path fill="#59636e" d="M0 1.75A.75.75 0 0 1 .75 1h4.253c1.227 0 2.317.59 3 1.501A3.743 3.743 0 0 1 11.006 1h4.245a.75.75 0 0 1 .75.75v10.5a.75.75 0 0 1-.75.75h-4.507a2.25 2.25 0 0 0-1.591.659l-.622.621a.75.75 0 0 1-1.060 0l-.622-.621A2.25 2.25 0 0 0 5.258 13H.75a.75.75 0 0 1-.75-.75Zm7.251 10.324.004-5.073-.002-2.253A2.25 2.25 0 0 0 5.003 2.5H1.5v9h3.757a3.75 3.75 0 0 1 1.994.574ZM8.755 4.75l-.004 7.322a3.752 3.752 0 0 1 1.992-.572H14.5v-9h-3.495a2.25 2.25 0 0 0-2.250 2.25Z"/></svg><div id="te7648f6b4c" class="t" style="left:866.10px;top:226px;font-size:12.6px;color:#59636e;letter-spacing:-0.072px;">Readme</div><svg style="position:absolute;left:841.20px;top:250.20px" width="14.4" height="14.4" viewBox="0 0 16 16"><path fill="#59636e" d="M8.75.75V2h.985c.304 0 .603.08.867.231l1.29.736c.038.022.08.033.124.033h2.234a.75.75 0 0 1 0 1.5h-.427l2.111 4.692a.75.75 0 0 1-.154.838l-.53-.53.529.531-.001.002-.002.002-.006.006-.006.005-.01.01-.045.04c-.21.176-.441.327-.686.45C14.556 10.78 13.88 11 13 11a4.498 4.498 0 0 1-2.023-.454 3.544 3.544 0 0 1-.686-.45l-.045-.04-.016-.015-.006-.006-.004-.004v-.001a.75.75 0 0 1-.154-.838L12.178 4.5h-.162c-.305 0-.604-.079-.868-.231l-1.29-.736a.245.245 0 0 0-.124-.033H8.75V13h2.5a.75.75 0 0 1 0 1.5h-6.5a.75.75 0 0 1 0-1.5h2.5V3.5h-.984a.245.245 0 0 0-.124.033l-1.289.737c-.265.15-.564.23-.869.23h-.162l2.112 4.692a.75.75 0 0 1-.154.838l-.53-.53.529.531-.001.002-.002.002-.006.006-.016.015-.045.04c-.21.176-.441.327-.686.45C4.556 10.78 3.88 11 3 11a4.498 4.498 0 0 1-2.023-.454 3.544 3.544 0 0 1-.686-.45l-.045-.04-.016-.015-.006-.006-.004-.004v-.001a.75.75 0 0 1-.154-.838L2.178 4.5H1.75a.75.75 0 0 1 0-1.5h2.234a.249.249 0 0 0 .125-.033l1.288-.737c.265-.15.564-.23.869-.23h.984V.75a.75.75 0 0 1 1.5 0Zm2.945 8.477c.285.135.718.273 1.305.273s1.02-.138 1.305-.273L13 6.327Zm-10 0c.285.135.718.273 1.305.273s1.02-.138 1.305-.273L3 6.327Z"/></svg><div id="t5f8e034ae8" class="t" style="left:867.00px;top:252px;font-size:12.6px;color:#59636e;letter-spacing:0.254px;">Apache-2.0 license</div><svg style="position:absolute;left:841.20px;top:276.20px" width="14.4" height="14.4" viewBox="0 0 16 16"><path fill="#59636e" d="M8.75.75V2h.985c.304 0 .603.08.867.231l1.29.736c.038.022.08.033.124.033h2.234a.75.75 0 0 1 0 1.5h-.427l2.111 4.692a.75.75 0 0 1-.154.838l-.53-.53.529.531-.001.002-.002.002-.006.006-.006.005-.01.01-.045.04c-.21.176-.441.327-.686.45C14.556 10.78 13.88 11 13 11a4.498 4.498 0 0 1-2.023-.454 3.544 3.544 0 0 1-.686-.45l-.045-.04-.016-.015-.006-.006-.004-.004v-.001a.75.75 0 0 1-.154-.838L12.178 4.5h-.162c-.305 0-.604-.079-.868-.231l-1.29-.736a.245.245 0 0 0-.124-.033H8.75V13h2.5a.75.75 0 0 1 0 1.5h-6.5a.75.75 0 0 1 0-1.5h2.5V3.5h-.984a.245.245 0 0 0-.124.033l-1.289.737c-.265.15-.564.23-.869.23h-.162l2.112 4.692a.75.75 0 0 1-.154.838l-.53-.53.529.531-.001.002-.002.002-.006.006-.016.015-.045.04c-.21.176-.441.327-.686.45C4.556 10.78 3.88 11 3 11a4.498 4.498 0 0 1-2.023-.454 3.544 3.544 0 0 1-.686-.45l-.045-.04-.016-.015-.006-.006-.004-.004v-.001a.75.75 0 0 1-.154-.838L2.178 4.5H1.75a.75.75 0 0 1 0-1.5h2.234a.249.249 0 0 0 .125-.033l1.288-.737c.265-.15.564-.23.869-.23h.984V.75a.75.75 0 0 1 1.5 0Zm2.945 8.477c.285.135.718.273 1.305.273s1.02-.138 1.305-.273L13 6.327Zm-10 0c.285.135.718.273 1.305.273s1.02-.138 1.305-.273L3 6.327Z"/></svg><div id="tddafe55539" class="t" style="left:867.00px;top:278px;font-size:12.6px;color:#59636e;letter-spacing:0.206px;">Security policy</div><svg style="position:absolute;left:841.20px;top:302.20px" width="14.4" height="14.4" viewBox="0 0 16 16"><path fill="#59636e" d="M6 2c.306 0 .582.187.696.471L10 10.731l1.304-3.26A.751.751 0 0 1 12 7h3.25a.75.75 0 0 1 0 1.5h-2.742l-1.812 4.528a.751.751 0 0 1-1.392 0L6 4.77 4.696 8.03A.75.75 0 0 1 4 8.5H.75a.75.75 0 0 1 0-1.5h2.742l1.812-4.529A.751.751 0 0 1 6 2Z"/></svg><div id="t5a0efe44a0" class="t" style="left:867.00px;top:304px;font-size:12.6px;color:#59636e;letter-spacing:0.180px;">Activity</div><svg style="position:absolute;left:841.20px;top:328.20px" width="14.4" height="14.4" viewBox="0 0 16 16"><path fill="#59636e" d="M0 3.75C0 2.784.784 2 1.75 2h12.5c.966 0 1.75.784 1.75 1.75v8.5A1.75 1.75 0 0 1 14.25 14H1.75A1.75 1.75 0 0 1 0 12.25Zm1.75-.25a.25.25 0 0 0-.25.25v8.5c0 .138.112.25.25.25h12.5a.25.25 0 0 0 .25-.25v-8.5a.25.25 0 0 0-.25-.25ZM3.5 6.25a.75.75 0 0 1 .75-.75h7a.75.75 0 0 1 0 1.5h-7a.75.75 0 0 1-.75-.75Zm.75 2.25h4a.75.75 0 0 1 0 1.5h-4a.75.75 0 0 1 0-1.5Z"/></svg><div id="t3c90521439" class="t" style="left:867.00px;top:330px;font-size:12.6px;color:#59636e;letter-spacing:0.281px;">Custom properties</div><svg style="position:absolute;left:841.20px;top:354.20px" width="14.4" height="14.4" viewBox="0 0 16 16"><path fill="#59636e" d="M8 .25a.75.75 0 0 1 .673.418l1.882 3.815 4.21.612a.75.75 0 0 1 .416 1.279l-3.046 2.97.719 4.192a.751.751 0 0 1-1.088.791L8 12.347l-3.766 1.98a.75.75 0 0 1-1.088-.79l.72-4.194L.818 6.374a.75.75 0 0 1 .416-1.28l4.210-.611L7.327.668A.75.75 0 0 1 8 .25Zm0 2.445L6.615 5.5a.75.75 0 0 1-.564.41l-3.097.45 2.24 2.184a.75.75 0 0 1 .216.664l-.528 3.084 2.769-1.456a.75.75 0 0 1 .698 0l2.770 1.456-.53-3.084a.75.75 0 0 1 .216-.664l2.24-2.183-3.096-.45a.75.75 0 0 1-.564-.41L8 2.694Z"/></svg><div id="tdc24f20c04" class="t" style="left:867.00px;top:356px;font-size:12.6px;color:#59636e;letter-spacing:-0.216px;"><span class="sb">1</span> star</div><svg style="position:absolute;left:841.20px;top:380.20px" width="14.4" height="14.4" viewBox="0 0 16 16"><path fill="#59636e" d="M8 2c1.981 0 3.671.992 4.933 2.078 1.27 1.091 2.187 2.345 2.637 3.023a1.62 1.62 0 0 1 0 1.798c-.45.678-1.367 1.932-2.637 3.023C11.67 13.008 9.981 14 8 14c-1.981 0-3.671-.992-4.933-2.078C1.797 10.83.88 9.576.43 8.898a1.62 1.62 0 0 1 0-1.798c.45-.677 1.367-1.931 2.637-3.022C4.33 2.992 6.019 2 8 2ZM1.679 7.932a.12.12 0 0 0 0 .136c.411.622 1.241 1.75 2.366 2.717C5.176 11.758 6.527 12.5 8 12.5c1.473 0 2.825-.742 3.955-1.715 1.124-.967 1.954-2.096 2.366-2.717a.12.12 0 0 0 0-.136c-.412-.621-1.242-1.75-2.366-2.717C10.824 4.242 9.473 3.5 8 3.5c-1.473 0-2.825.742-3.955 1.715-1.124.967-1.954 2.096-2.366 2.717ZM8 10a2 2 0 1 1-.001-3.999A2 2 0 0 1 8 10Z"/></svg><div id="te059537158" class="t" style="left:867.00px;top:382px;font-size:12.6px;color:#59636e;letter-spacing:0.380px;"><span class="sb">6</span> watching</div><svg style="position:absolute;left:841.20px;top:406.20px" width="14.4" height="14.4" viewBox="0 0 16 16"><path fill="#59636e" d="M5 5.372v.878c0 .414.336.75.75.75h4.5a.75.75 0 0 0 .75-.75v-.878a2.25 2.25 0 1 1 1.5 0v.878a2.25 2.25 0 0 1-2.25 2.25h-1.5v2.128a2.251 2.251 0 1 1-1.5 0V8.5h-1.5A2.25 2.25 0 0 1 3.5 6.250v-.878a2.25 2.25 0 1 1 1.5 0ZM5 3.25a.75.75 0 1 0-1.5 0 .75.75 0 0 0 1.5 0Zm6.75.75a.75.75 0 1 0 0-1.5.75.75 0 0 0 0 1.5Zm-3 8.75a.75.75 0 1 0-1.5 0 .75.75 0 0 0 1.5 0Z"/></svg><div id="t81f0b303da" class="t" style="left:867.00px;top:408px;font-size:12.6px;color:#59636e;letter-spacing:0.206px;"><span class="sb">10</span> forks</div><div id="t912279c33f" class="t" style="left:841.34px;top:434px;font-size:12.6px;color:#59636e;letter-spacing:0.247px;">Report repository</div><div style="position:absolute;left:841px;top:465px;width:267px;height:1px;box-sizing:border-box;background:#d1d9e0;"></div><div id="t25886cd176" class="t" style="left:842.00px;top:484px;font-size:14.1px;font-weight:700;letter-spacing:-0.154px;">Releases</div><div style="position:absolute;left:906.4px;top:483.3px;width:24.5px;height:17.5px;box-sizing:border-box;background:#e8eaed;border-radius:9px;"></div><div id="t8a1fad774b" class="t" style="left:912.42px;top:488px;font-size:10.4px;letter-spacing:-0.540px;-webkit-text-stroke:0.1px currentColor;">14</div><svg style="position:absolute;left:841.30px;top:518.90px" width="14.4" height="14.4" viewBox="0 0 16 16"><path fill="#1a7f37" d="M1 7.775V2.75C1 1.784 1.784 1 2.75 1h5.025c.464 0 .91.184 1.238.513l6.25 6.25a1.75 1.75 0 0 1 0 2.474l-5.026 5.026a1.75 1.75 0 0 1-2.474 0l-6.25-6.25A1.752 1.752 0 0 1 1 7.775Zm1.5 0c0 .066.026.13.073.177l6.25 6.25a.25.25 0 0 0 .354 0l5.025-5.025a.25.25 0 0 0 0-.354l-6.25-6.25a.25.25 0 0 0-.177-.073H2.75a.25.25 0 0 0-.25.25ZM6 5a1 1 0 1 1 0 2 1 1 0 0 1 0-2Z"/></svg><div id="tebec743205" class="t" style="left:863.66px;top:519px;font-size:11.6px;letter-spacing:0.180px;-webkit-text-stroke:0.5px currentColor;">v1.2.1</div><div style="position:absolute;left:904px;top:516.3px;width:45px;height:18.5px;box-sizing:border-box;border:1px solid #1f883d;border-radius:10px;"></div><div id="t957b5c010e" class="t" style="left:911.20px;top:520px;font-size:10.8px;color:#1a7f37;-webkit-text-stroke:0.45px currentColor;">Latest</div><div id="t78de94332f" class="t" style="left:862.76px;top:537px;font-size:10.8px;color:#59636e;letter-spacing:0.342px;">3 weeks ago</div><div id="t1a4ddbd3e3" class="t" style="left:842.00px;top:568px;font-size:12.6px;color:#0969da;letter-spacing:-0.015px;">+ 13 releases</div><div style="position:absolute;left:841px;top:599px;width:267px;height:1px;box-sizing:border-box;background:#d1d9e0;"></div><svg style="position:absolute;left:0;top:0" width="1163" height="619" viewBox="0 0 1163 619"><path d="M1071 240 C1071.5 280 1065 303 1037.8 328" stroke="#fc3323" stroke-width="14" fill="none"/><path fill="#fc3323" d="M1052.1 174.4 L1106.6 236.9 L1034.2 255.5 Z"/></svg>
</body></html>
